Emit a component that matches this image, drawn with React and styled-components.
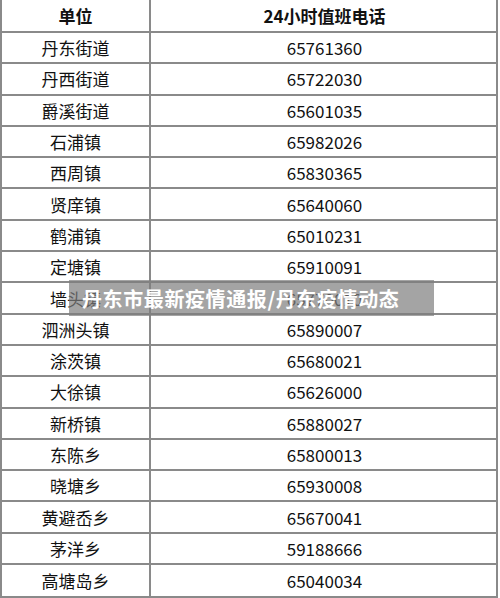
import React from 'react';
import styled, { createGlobalStyle } from 'styled-components';

const GlobalStyle = createGlobalStyle`
  html, body {
    margin: 0;
    padding: 0;
    background: #ffffff;
  }
  body {
    font-family: "Noto Sans CJK SC", "Noto Sans", sans-serif;
  }
`;

const Sheet = styled.div`
  position: relative;
  width: 498px;
  box-sizing: border-box;
  border-left: 2px solid #8a8a8a;
  border-right: 2px solid #8a8a8a;
  border-bottom: 2px solid #8a8a8a;
  background: #fff;
`;

const Row = styled.div`
  display: grid;
  grid-template-columns: 149px 1fr;
  height: ${props => (props.$head ? '33px' : '31.3px')};
  box-sizing: border-box;
  border-bottom: ${props => (props.$last ? 'none' : '2px solid #8a8a8a')};
`;

const Cell = styled.div`
  display: flex;
  align-items: center;
  justify-content: center;
  font-size: 17px;
  font-weight: ${props => (props.$head ? 700 : 400)};
  color: #111;
  border-right: ${props => (props.$first ? '2px solid #8a8a8a' : 'none')};
  padding-left: ${props => (props.$first ? '0' : '2px')};
  white-space: nowrap;
`;

const Banner = styled.div`
  position: absolute;
  top: 280px;
  left: 67px;
  width: 365px;
  height: 36px;
  box-sizing: border-box;
  padding-left: 13px;
  display: flex;
  align-items: center;
  background: rgba(125, 125, 125, 0.7);
  color: #fff;
  font-size: 20px;
  font-weight: 700;
  letter-spacing: 0.6px;
  white-space: nowrap;
`;

const rows = [
  ['丹东街道', '65761360'],
  ['丹西街道', '65722030'],
  ['爵溪街道', '65601035'],
  ['石浦镇', '65982026'],
  ['西周镇', '65830365'],
  ['贤庠镇', '65640060'],
  ['鹤浦镇', '65010231'],
  ['定塘镇', '65910091'],
  ['墙头镇', '65770010'],
  ['泗洲头镇', '65890007'],
  ['涂茨镇', '65680021'],
  ['大徐镇', '65626000'],
  ['新桥镇', '65880027'],
  ['东陈乡', '65800013'],
  ['晓塘乡', '65930008'],
  ['黄避岙乡', '65670041'],
  ['茅洋乡', '59188666'],
  ['高塘岛乡', '65040034']
];

const App = () => {
  return (
    <>
      <GlobalStyle />
      <Sheet>
        <Row $head>
          <Cell $head $first>单位</Cell>
          <Cell $head>24小时值班电话</Cell>
        </Row>
        {rows.map(([name, phone], i) => (
          <Row key={name} $last={i === rows.length - 1}>
            <Cell $first>{name}</Cell>
            <Cell>{phone}</Cell>
          </Row>
        ))}
        <Banner>丹东市最新疫情通报/丹东疫情动态</Banner>
      </Sheet>
    </>
  );
};

export default App;
